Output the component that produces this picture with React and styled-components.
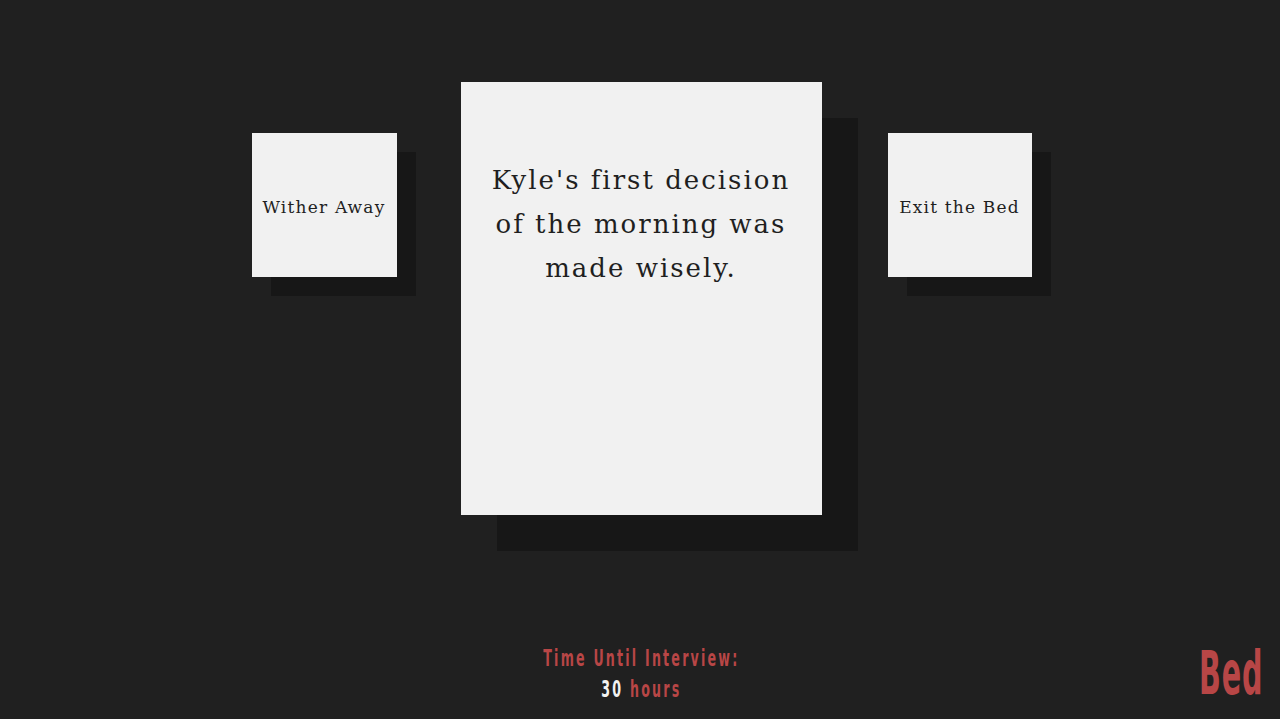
import React from "react";
import styled, { createGlobalStyle } from "styled-components";

const Global = createGlobalStyle`
  html, body { margin: 0; padding: 0; background: #202020; }
  body { overflow: hidden; }
`;

const Page = styled.div`
  width: 1280px;
  height: 719px;
  background: #202020;
  display: flex;
  flex-direction: column;
  box-sizing: border-box;
`;

const Stage = styled.div`
  flex: 1;
  display: flex;
  justify-content: center;
  align-items: flex-start;
  padding-top: 82px;
  padding-left: 3px;
  gap: 64px;
`;

const Card = styled.div`
  background: #f1f1f1;
  color: #1f1f1f;
  font-family: "DejaVu Serif", "Liberation Serif", serif;
  box-sizing: border-box;
  display: flex;
  justify-content: center;
  text-align: center;
`;

const MainCard = styled(Card)`
  width: 361px;
  height: 433px;
  box-shadow: 36px 36px 0 #171717;
  align-items: flex-start;
  padding: 76px 26px 0;
  font-size: 26px;
  letter-spacing: 2px;
  line-height: 44px;
`;

const Choice = styled(Card)`
  width: ${(p) => (p.$right ? "144px" : "145px")};
  height: 144px;
  margin-top: 51px;
  margin-left: ${(p) => (p.$right ? "2px" : "0")};
  box-shadow: 19px 19px 0 #171717;
  align-items: center;
  font-size: 17px;
  letter-spacing: 1.2px;
  padding: 4px 0 0;
  white-space: nowrap;
`;

const Footer = styled.div`
  display: grid;
  grid-template-columns: 1fr auto 1fr;
  align-items: end;
  padding: 0 16px 16px;
  font-family: "DejaVu Sans", sans-serif;
  font-weight: 700;
`;

const Timer = styled.div`
  grid-column: 2;
  text-align: center;
  color: #b84646;
  font-size: 23px;
  letter-spacing: 4px;
  line-height: 31px;
  margin-left: 2px;
  margin-bottom: -2px;
  transform: scaleX(0.55);
`;

const Hours = styled.span`
  color: ${(p) => (p.$num ? "#f2f2f2" : "#b84646")};
`;

const Room = styled.div`
  grid-column: 3;
  justify-self: end;
  color: #b84646;
  font-size: 61px;
  line-height: 60px;
  letter-spacing: 2px;
  transform: scaleX(0.47);
  transform-origin: right bottom;
`;

export default function App() {
  return (
    <>
      <Global />
      <Page>
        <Stage>
          <Choice>Wither Away</Choice>
          <MainCard>
            Kyle's first decision of the morning was made wisely.
          </MainCard>
          <Choice $right>Exit the Bed</Choice>
        </Stage>
        <Footer>
          <Timer>
            Time Until Interview:
            <br />
            <Hours $num>30</Hours> <Hours>hours</Hours>
          </Timer>
          <Room>Bed</Room>
        </Footer>
      </Page>
    </>
  );
}
